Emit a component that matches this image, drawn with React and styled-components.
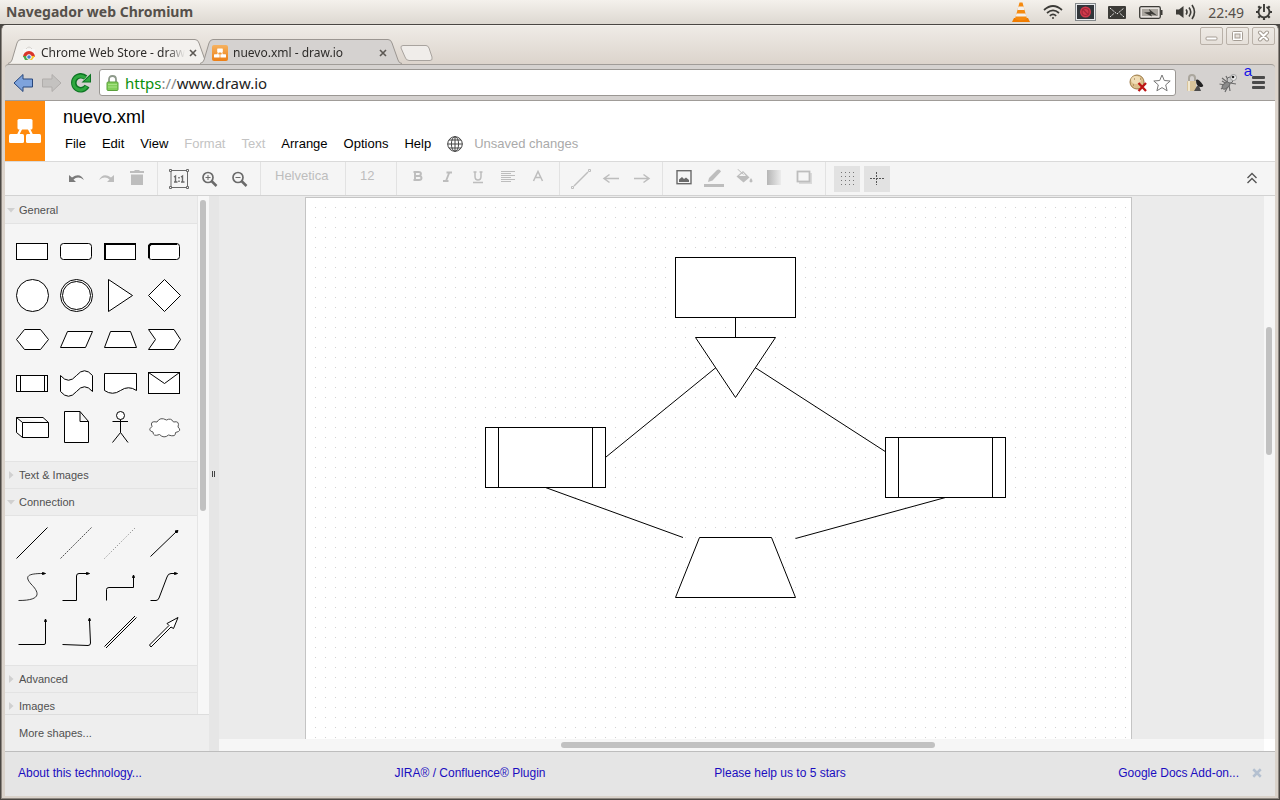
import React, { useState } from 'react';
import styled, { createGlobalStyle } from 'styled-components';

const GlobalStyle = createGlobalStyle`
    * {
        box-sizing: border-box;
    }
    body {
        margin: 0;
        background-color: #4a4743;
        font-family: "Liberation Sans", Arial, sans-serif;
    }
    button {
        padding: 0;
        border: none;
        background: none;
        font: inherit;
        color: inherit;
    }
    svg {
        display: block;
        flex: none;
    }
`;

const Desktop = styled.div`
    display: flex;
    flex-direction: column;
    height: 100vh;
    min-height: 600px;
`;

/* ---------- system panel ---------- */

const Panel = styled.header`
    display: flex;
    align-items: center;
    justify-content: space-between;
    height: 24px;
    flex: none;
    padding: 0 8px 0 6px;
    background: linear-gradient(#f4f1ec, #ddd8d1);
    color: #55504a;
    font-family: "Noto Sans", "Open Sans", sans-serif;
    font-size: 14px;
`;

const PanelTitle = styled.h1`
    margin: 0;
    font-size: 14px;
    line-height: 20px;
    font-weight: bold;
`;

const Tray = styled.div`
    display: flex;
    align-items: center;
    gap: 12px;
`;

/* ---------- browser window ---------- */

const Window = styled.div`
    display: flex;
    flex-direction: column;
    flex: 1;
    min-height: 0;
    margin: 1px 1px 1px 1px;
    padding: 0 3px 2px 3px;
    border: 1px solid #8d8781;
    border-top-color: #f5f2ee;
    border-radius: 5px 5px 0 0;
    background: linear-gradient(#efebe6, #dcd4cc 38px, #d9d2ca);
`;

const TabStrip = styled.div`
    display: flex;
    align-items: flex-end;
    height: 38px;
    flex: none;
    padding-left: 3px;
    position: relative;
`;

const TabBox = styled.div`
    position: relative;
    display: flex;
    align-items: center;
    width: ${props => props.$width}px;
    height: 25px;
    margin-right: -9px;
    padding: 2px 13px 0 ${props => props.$pad}px;
    z-index: ${props => (props.$active ? 2 : 1)};
    color: #2e2c2a;
    font-family: "Noto Sans", "Open Sans", sans-serif;
    font-size: 12px;

    > svg:first-child {
        position: absolute;
        left: 0;
        top: 0;
    }
    > svg + svg {
        position: relative;
    }
`;

const TabLabel = styled.span`
    position: relative;
    flex: 1;
    margin-left: 5px;
    white-space: nowrap;
    mask-image: linear-gradient(to right, #000 calc(100% - 18px), transparent);
`;

const TabClose = styled.button`
    position: relative;
    display: grid;
    place-items: center;
    width: 12px;
    height: 16px;
    margin-left: 4px;
    color: #5c5854;
`;

const NewTab = styled.button`
    width: 34px;
    height: 18px;
    margin: 0 0 2px 7px;
`;

const WindowButtons = styled.div`
    display: flex;
    gap: 3px;
    position: absolute;
    top: 1px;
    right: 0;
`;

const WindowButton = styled.button`
    display: grid;
    place-items: center;
    width: 23px;
    height: 18px;
    border: 1px solid #b9b1a8;
    border-radius: 2px;
`;

const AddressBar = styled.div`
    position: relative;
    display: flex;
    align-items: center;
    height: 37px;
    flex: none;
    padding: 0 10px 0 7px;
    border: 1px solid #a09c98;
    border-width: 1px 0;
    border-radius: 4px 4px 0 0;
    background-color: #d5d2d0;
`;

const NavButton = styled.button`
    width: 22px;
    height: 22px;
    margin-right: 7px;
`;

const UrlField = styled.label`
    display: flex;
    align-items: center;
    flex: 1;
    height: 27px;
    padding: 0 4px 0 6px;
    border: 1px solid #9a9793;
    border-radius: 3px;
    background-color: #fff;
    gap: 6px;
`;

const UrlLayers = styled.span`
    position: relative;
    flex: 1;
    height: 24px;
    font-family: "Noto Sans", "Open Sans", sans-serif;
    font-size: 15px;
    line-height: 24px;
    color: #222;
`;

const UrlInput = styled.input`
    position: absolute;
    inset: 0;
    width: 100%;
    padding: 0;
    border: none;
    outline: none;
    background: transparent;
    font: inherit;
    color: transparent;
    caret-color: #222;
`;

const Scheme = styled.span`
    color: #0a8f0a;
`;

const Slashes = styled.span`
    color: #8a8a8a;
`;

const Extensions = styled.div`
    display: flex;
    align-items: center;
    gap: 14px;
    margin-left: 8px;
`;

const StrayLetter = styled.span`
    position: absolute;
    top: -2px;
    right: 23px;
    color: #1414e6;
    font-size: 15px;
    line-height: 16px;
`;

/* ---------- editor ---------- */

const Editor = styled.main`
    display: flex;
    flex-direction: column;
    flex: 1;
    min-height: 0;
    background-color: #ebebeb;
`;

const EditorHeader = styled.div`
    display: flex;
    height: 60px;
    flex: none;
    background-color: #fff;
`;

const Logo = styled.a`
    display: grid;
    place-items: center;
    width: 40px;
    background-color: #ff8a0d;
`;

const HeaderText = styled.div`
    padding: 4px 0 0 10px;
`;

const FileName = styled.h2`
    margin: 0;
    padding-left: 8px;
    font-size: 18px;
    line-height: 24px;
    font-weight: normal;
    color: #000;
`;

const MenuBar = styled.nav`
    display: flex;
    align-items: center;
    padding: 4px 2px;
    font-size: 13px;
    line-height: 22px;
`;

const MenuItem = styled.button`
    padding: 0 8px;
    color: #000;
    &:disabled {
        color: #c3c3c3;
    }
`;

const Status = styled.span`
    padding-left: 3px;
    color: #aaa;
`;

const Toolbar = styled.div`
    display: flex;
    height: 35px;
    flex: none;
    border-top: 1px solid #dadada;
    border-bottom: 1px solid #d2d2d2;
    background-color: #f5f5f5;
`;

const ToolGroup = styled.div`
    display: flex;
    align-items: center;
    padding: 0 6px;
    border-left: 1px solid #e2e2e2;
    &:first-child {
        padding: 0 5px 0 57px;
        border-left: none;
    }
`;

const ToolButton = styled.button`
    display: grid;
    place-items: center;
    width: 26px;
    height: 26px;
    margin: 0 2px;
    background-color: ${props => (props.$on ? '#e2e2e2' : 'transparent')};
    color: ${props => (props.$faint ? '#bdbdbd' : '#6a6a6a')};
`;

const FontPicker = styled.button`
    width: ${props => props.$width}px;
    height: 26px;
    padding: 0 0 6px 8px;
    font-size: 13px;
    line-height: 20px;
    text-align: left;
    color: #bdbdbd;
`;

const CollapseButton = styled(ToolButton)`
    margin: 3px 10px 0 auto;
`;

const Workspace = styled.div`
    display: flex;
    flex: 1;
    min-height: 0;
`;

const Sidebar = styled.aside`
    display: flex;
    flex-direction: column;
    width: 204px;
    flex: none;
    color: #505050;
    font-size: 11px;
`;

const SidebarScroll = styled.div`
    display: flex;
    flex: 1;
    min-height: 0;
    overflow: hidden;
    background-color: #f7f7f7;
`;

const Palettes = styled.div`
    width: 193px;
    padding-top: 1px;
    border-right: 1px solid #e5e5e5;
    background-color: #eee;
`;

const SidebarTrack = styled.div`
    flex: 1;
    padding: 4px 2px;
`;

const Thumb = styled.div`
    border-radius: 3px;
    background-color: #c1c1c1;
`;

const SidebarThumb = styled(Thumb)`
    width: 6px;
    height: 61%;
`;

const PaletteTitle = styled.button`
    display: flex;
    align-items: center;
    width: 100%;
    height: 27px;
    gap: 4px;
    padding-left: 2px;
    border-bottom: 1px solid #e3e3e3;
    background-color: #eee;
`;

const PaletteBody = styled.div`
    display: grid;
    grid-template-columns: repeat(4, 44px);
    grid-auto-rows: 44px;
    padding: 5px 0 12px 5px;
    border-bottom: 1px solid #e3e3e3;
    background-color: #f5f5f5;
`;

const ShapeButton = styled.button`
    display: grid;
    place-items: center;
`;

const MoreShapes = styled.button`
    height: 37px;
    flex: none;
    padding-left: 14px;
    border-top: 1px solid #ddd;
    background-color: #eee;
    text-align: left;
`;

const Splitter = styled.div`
    display: grid;
    place-items: center;
    width: 10px;
    flex: none;
    background-color: #e6e6e6;
`;

const CanvasArea = styled.div`
    display: grid;
    grid-template-columns: 1fr 11px;
    grid-template-rows: 1fr 12px;
    flex: 1;
    min-width: 0;
`;

const Canvas = styled.div`
    display: flex;
    min-height: 0;
    overflow: hidden;
    padding: 1px 0 0 86px;
`;

const Sheet = styled.div`
    width: 827px;
    flex: none;
    border: 1px solid #c4c4c4;
    border-bottom: none;
    background-color: #fff;
`;

const TrackY = styled.div`
    padding: 131px 2px 0 2px;
    background-color: #f6f6f6;
`;

const TrackX = styled.div`
    padding: 3px 0 0 calc(33% - 3px);
    background-color: #f6f6f6;
`;

const ThumbY = styled(Thumb)`
    width: 6px;
    height: 128px;
`;

const ThumbX = styled(Thumb)`
    width: 374px;
    height: 6px;
`;

const Corner = styled.div`
    background-color: #fff;
`;

const Footer = styled.footer`
    display: grid;
    grid-template-columns: repeat(4, 1fr) 30px;
    align-items: center;
    height: 45px;
    flex: none;
    padding-bottom: 2px;
    border-top: 1px solid #bdbdbd;
    background-color: #e5e5e5;
    font-size: 12px;
    text-align: center;

    a {
        color: #1a0dc0;
        text-decoration: none;
    }
    a:first-child {
        padding-left: 13px;
        text-align: left;
    }
    a:nth-child(4) {
        padding-right: 6px;
        text-align: right;
    }
`;

const FooterClose = styled.button`
    display: grid;
    place-items: center;
    width: 24px;
    height: 20px;
    color: #b4c0d0;
`;

/* ---------- drawings ---------- */

const TrayIcons = () => (
    <>
        <svg width="20" height="22" viewBox="0 0 20 22">
            <path d="M3 17 h14 l2 4 h-18z" fill="#f07c00" />
            <path d="M8.5 1.500 h3 L16 18 q-6 2.500 -12 0z" fill="#f58a10" />
            <path d="M7.400 5.500 h5.200 l1 3.500 h-7.200z M5.500 12.500 h9 l.9 3 h-10.800z" fill="#f4f1ee" />
        </svg>
        <svg width="20" height="16" viewBox="0 0 20 16" fill="none" stroke="#3c3b37" strokeWidth="1.700">
            <path d="M1 6 Q10 -2 19 6 M4 9 Q10 3.600 16 9 M6.800 11.800 Q10 9 13.200 11.800" />
            <circle cx="10" cy="14" r="1" fill="#3c3b37" stroke="none" />
        </svg>
        <svg width="21" height="18" viewBox="0 0 21 18">
            <rect x=".5" y=".5" width="20" height="17" fill="#e7eaed" stroke="#85898b" />
            <rect x="2" y="2" width="17" height="14" fill="#32363a" />
            <circle cx="10.500" cy="9" r="5.500" fill="#d23b4c" />
            <circle cx="10.500" cy="9" r="3.500" fill="none" stroke="#a3273a" strokeWidth="1.200" />
            <path d="M8 6.500 l5 5" stroke="#a3273a" strokeWidth="1.200" />
        </svg>
        <svg width="18" height="13" viewBox="0 0 18 13">
            <rect width="18" height="13" rx="1" fill="#3c3b37" />
            <path d="M2 2 L9 8 L16 2 M2 11 L6.500 7 M16 11 L11.500 7" fill="none" stroke="#eee" strokeDasharray="2 1" />
        </svg>
        <svg width="26" height="13" viewBox="0 0 26 13">
            <rect x="1.700" y=".7" width="20.600" height="11.600" rx="1.500" fill="#e5e1dc" stroke="#3c3b37" strokeWidth="1.300" />
            <rect x="4" y="3" width="16" height="7" fill="#aaa69f" />
            <rect x="23" y="4" width="1.500" height="5" fill="#3c3b37" />
            <path d="M6 6.500 l6 -.5 l-1 -3 l8 6.500 l-6 -1.500 l1 2.500z" fill="#3c3b37" />
        </svg>
        <svg width="20" height="16" viewBox="0 0 20 16" fill="none" stroke="#3c3b37" strokeWidth="1.600">
            <path d="M0 5.500 h3 l4.500 -3.500 v12 l-4.500 -3.500 h-3z" fill="#3c3b37" stroke="none" />
            <path d="M10 5.500 q2 2.500 0 5 M13 3.500 q3.500 4.500 0 9 M16 1 q5 7 0 14" />
        </svg>
    </>
);

const PowerIcon = () => (
    <svg width="16" height="16" viewBox="0 0 16 16" fill="none" stroke="#3c3b37">
        <path d="M5.500 3 A5.500 5.500 0 1 0 10.500 3" strokeWidth="1.900" />
        <path d="M8 0 v8" strokeWidth="1.900" />
        <path d="M0 8 h3 M13 8 h3 M8 13 v3 M2.300 2.300 l2 2 M13.700 2.300 l-2 2 M2.300 13.700 l2 -2 M13.700 13.700 l-2 -2" strokeWidth="2.200" />
    </svg>
);

const TabShape = ({ width, active }) => (
    <svg width={width} height="25" fill={active ? '#d5d2d0' : '#f3f1ee'} stroke="#9b9691">
        <path d={`M0 24.500 Q3 24 4 21 L9 4 Q10 .5 13 .5 H${width - 14} Q${width - 11} .5 ${width - 10} 4 L${width - 4} 21 Q${width - 3} 24.500 ${width} 24.500`} />
        {active && <path d={`M2 24.500 H${width - 2}`} stroke="#d5d2d0" />}
    </svg>
);

const StoreIcon = () => (
    <svg width="14" height="16" viewBox="0 0 14 16">
        <path d="M4 4 Q7 0 10 4" fill="none" stroke="#d6d3d0" />
        <rect x="1" y="4" width="12" height="11" rx="1" fill="#f7f7f7" />
        <path d="M1 12 a6 6 0 0 1 12 0 l-6 0z" fill="#d9352b" />
        <path d="M1 11 l2 4 h4 l-2 -4z" fill="#4aa847" />
        <path d="M13 11 l-3 4 h-4 l3 -4z" fill="#f6c52b" />
        <circle cx="7" cy="12" r="2.300" fill="#4580cf" stroke="#fff" />
    </svg>
);

const DrawIoGlyph = ({ size }) => (
    <svg width={size} height={size} viewBox="0 0 32 32" fill="#fff">
        <path d="M13 12 L8.500 21 M19 12 L23.500 21" stroke="#fff" strokeWidth="2.200" />
        <rect x="8.500" y="4" width="15" height="10.500" rx="1.500" />
        <rect x="0" y="19" width="15" height="9" rx="1.500" />
        <rect x="17" y="19" width="15" height="9" rx="1.500" />
    </svg>
);

const FavIcon = styled.span`
    position: relative;
    display: grid;
    place-items: center;
    width: 16px;
    height: 16px;
    border-radius: 2px;
    background: linear-gradient(#f6b25f, #ec7f16);
`;

const CrossIcon = ({ size = 8, width = 2 }) => (
    <svg width={size} height={size} viewBox="0 0 8 8" stroke="currentColor" strokeWidth={width}>
        <path d="M1 1 L7 7 M7 1 L1 7" />
    </svg>
);

const NavArrow = ({ flip, fill, stroke }) => (
    <svg width="22" height="22" viewBox="0 0 22 22">
        <path
            d="M2 11 L11 2.500 V7 H20.500 V15 H11 V19.500 Z"
            transform={flip ? 'matrix(-1 0 0 1 22 0)' : undefined}
            fill={fill}
            stroke={stroke}
            strokeLinejoin="round"
        />
    </svg>
);

const ReloadIcon = () => (
    <svg width="22" height="22" viewBox="0 0 22 22">
        <path d="M17 14 A7 7 0 1 1 15.500 5.500" fill="none" stroke="#0d7423" strokeWidth="5.500" />
        <path d="M21 1.500 V10.500 H11.500 Z" fill="#0d7423" />
        <path d="M16.500 14.500 A7 7 0 1 1 15.500 6" fill="none" stroke="#2fa83f" strokeWidth="3" />
        <path d="M20 4 V9.500 H14 Z" fill="#2fa83f" />
    </svg>
);

const LockIcon = () => (
    <svg width="13" height="16" viewBox="0 0 13 16">
        <path d="M3 8 V4.500 Q3 1 6.500 1 Q10 1 10 4.500 V8" fill="none" stroke="#8e9a8b" strokeWidth="1.800" />
        <rect x="1" y="7" width="11" height="8.500" rx="1" fill="#82cf5a" stroke="#5aa03b" />
        <path d="M2 9.500 h9 M2 12 h9" stroke="#a8e285" />
    </svg>
);

const CookieIcon = () => (
    <svg width="18" height="18" viewBox="0 0 18 18">
        <circle cx="8" cy="8" r="7" fill="#dcbf8c" stroke="#9b7a47" />
        <ellipse cx="7" cy="6" rx="5" ry="4" fill="#efdcb5" />
        <path d="M4 11 h1 M11 5 h1 M5 5 h1" stroke="#8a673a" />
        <path d="M9.500 9 L17 17 M17 9 L9.500 17" stroke="#bd1414" strokeWidth="2.300" />
    </svg>
);

const StarIcon = () => (
    <svg width="18" height="18" viewBox="0 0 18 18">
        <path d="M9 1 L11.300 6.500 L17.200 7 L12.700 10.900 L14.100 16.800 L9 13.600 L3.900 16.800 L5.300 10.900 L.8 7 L6.700 6.500 Z" fill="#fff" stroke="#777" strokeLinejoin="round" />
    </svg>
);

const PadlockDishIcon = () => (
    <svg width="20" height="20" viewBox="0 0 20 20">
        <path d="M5 9 V5 Q5 2 8 2 Q11 2 11 5 V8" fill="none" stroke="#aaa69d" strokeWidth="2" />
        <rect x="3" y="8" width="9" height="10" rx="1" fill="#d8c49a" />
        <path d="M5 8 v10" stroke="#f2e8cf" strokeWidth="2" />
        <path d="M12 7 Q14 5 19 12 Q20 14 16 14 Q12 13 12 7z" fill="#232323" />
        <path d="M13 13 L10 18 h7 l-2 -5z" fill="#4b4b4b" />
    </svg>
);

const BugIcon = () => (
    <svg width="20" height="20" viewBox="0 0 20 20" stroke="#6b6b6b">
        <path d="M4 8 L9 11 M1.500 11 L7 12 M3 16 L8 13 M7 19 L10 13 M12 18 L11 12 M8 3 L11 9 M18 11 L12 10 M4 5 L9 9" strokeWidth="1.200" />
        <ellipse cx="8" cy="12.500" rx="4.500" ry="2.500" transform="rotate(-42 8 12.500)" fill="#8b8b8b" />
        <circle cx="12" cy="7" r="3" fill="#c9c9c9" />
        <circle cx="15.500" cy="4.500" r="3" fill="#eee" stroke="#999" />
        <circle cx="15" cy="4" r="1.300" fill="#222" stroke="none" />
    </svg>
);

const MenuIcon = () => (
    <svg width="13" height="13" viewBox="0 0 13 13" fill="#4a4a4a">
        <rect width="13" height="3" rx="1" />
        <rect y="5" width="13" height="3" rx="1" />
        <rect y="10" width="13" height="3" rx="1" />
    </svg>
);

const GlobeIcon = () => (
    <svg width="16" height="16" viewBox="0 0 16 16" fill="none" stroke="#444">
        <circle cx="8" cy="8" r="7.300" />
        <ellipse cx="8" cy="8" rx="3.600" ry="7.300" />
        <path d="M8 .5 V15.500 M.5 8 H15.500 M2 4 H14 M2 12 H14" />
    </svg>
);

const toolIcons = {
    undo: <path d="M2 6 V13 H9 L6.500 10.500 Q11 6.500 17 11 Q13 3 5 8.500 Z" fill="#7b7b7b" stroke="none" />,
    redo: <path d="M17 6 V13 H10 L12.500 10.500 Q8 6.500 2 11 Q6 3 14 8.500 Z" fill="currentColor" stroke="none" />,
    trash: <path d="M3 2 h4 l1 -1 h4 l1 1 h4 v2 H3z M4 5.500 H16 V16 H4z" fill="currentColor" stroke="none" />,
    actual: (
        <>
            <path d="M2 1.500 H18.500 V18.500 H2 Z" />
            <path d="M.5 .5 h2 v2 h-2z M17.500 .5 h2 v2 h-2z M.5 17.500 h2 v2 h-2z M17.500 17.500 h2 v2 h-2z" fill="#f5f5f5" />
            <path d="M5 8 l1.500 -1 v6 M5 13 h3.500 M12 8 l1.500 -1 v6 M12 13 h3.500" strokeWidth="1.400" />
            <path d="M10 8 v1.500 M10 11.500 v1.500" strokeWidth="1.500" />
        </>
    ),
    zoomIn: (
        <>
            <circle cx="9" cy="8.500" r="5" strokeWidth="1.700" />
            <path d="M12.500 12 L17.500 17" strokeWidth="2.500" />
            <path d="M6.500 8.500 h5 M9 6 v5" />
        </>
    ),
    zoomOut: (
        <>
            <circle cx="9" cy="8.500" r="5" strokeWidth="1.700" />
            <path d="M12.500 12 L17.500 17" strokeWidth="2.500" />
            <path d="M6.500 8.500 h5" />
        </>
    ),
    bold: <path d="M7 3 H10.500 Q13 3 13 5 Q13 6.500 11 6.800 Q13.500 7.200 13.500 9 Q13.500 11 11 11 H7 Z M5.500 3 H8 M5.500 11 H8 M7.500 7 H11" strokeWidth="1.900" />,
    italic: <path d="M8.500 3.500 H14 M5 12 H10.500 M11.500 3 L8 12" strokeWidth="1.900" />,
    underline: <path d="M7 3 V7.500 Q7 11 10 11 Q13 11 13 7.500 V3 M5.500 3 H8.500 M11.500 3 H14.500 M5 13.500 H15" strokeWidth="1.500" />,
    align: <path d="M3 2.500 H17 M3 4.500 H13 M3 6.500 H17 M3 8.500 H13 M3 10.500 H17 M3 12.500 H13" />,
    fontColor: <path d="M5.500 12 L10 2.500 L14.500 12 M7 8.500 H13" strokeWidth="1.500" />,
    line: (
        <>
            <path d="M3 17 L17 3" strokeWidth="1.400" />
            <path d="M.5 17.500 h2 v2 h-2z M17.500 .5 h2 v2 h-2z" fill="#f5f5f5" />
        </>
    ),
    arrowLeft: <path d="M3 9.500 H18 M8.500 5.500 L3 9.500 L8.500 13.500" strokeWidth="1.500" />,
    arrowRight: <path d="M3 9.500 H18 M12.500 5.500 L18 9.500 L12.500 13.500" strokeWidth="1.500" />,
    image: (
        <>
            <rect x="3" y="1.700" width="14" height="13" strokeWidth="1.400" />
            <path d="M5 13 V10.500 L8 8 L10 10 L12 8.500 L15 11 V13z" fill="currentColor" stroke="none" />
        </>
    ),
    pencil: (
        <>
            <path d="M4 13 L5 9 L13 1 Q15.500 -.5 17 2.500 L8.500 11.500 Z" fill="currentColor" stroke="none" />
            <path d="M0 16.500 H20" strokeWidth="3" />
        </>
    ),
    bucket: (
        <>
            <path d="M9 2 L15.500 8.500 L9.500 13.500 L2.500 7.500z" fill="currentColor" stroke="none" />
            <path d="M5 7 L9 3.500 L12 7z" fill="#f5f5f5" stroke="none" />
            <path d="M3.500 0 L9.500 5.500" />
            <path d="M17 9 q3 4 0 4.500 q-3 -.5 0 -4.500z" fill="currentColor" stroke="none" />
        </>
    ),
    gradient: (
        <>
            <defs>
                <linearGradient id="fade">
                    <stop offset="0" stopColor="#b5b5b5" />
                    <stop offset="1" stopColor="#ececec" />
                </linearGradient>
            </defs>
            <rect x="3" y="1" width="14" height="15" fill="url(#fade)" stroke="none" />
        </>
    ),
    shadow: (
        <>
            <rect x="5" y="4" width="13" height="11" fill="#dadada" stroke="none" />
            <rect x="3.500" y="2.500" width="12" height="10" fill="#f5f5f5" strokeWidth="1.800" />
        </>
    ),
    grid: <path d="M4 3.500 H17 M4 7.500 H17 M4 11.500 H17 M4 15.500 H17" stroke="#777" strokeDasharray="1 3" />,
    guides: <path d="M3 9.500 H17 M9.500 3 V16" stroke="#555" strokeDasharray="2 1" />,
    collapse: <path d="M5.500 10 L10 5.500 L14.500 10 M5.500 15 L10 10.500 L14.500 15" stroke="#555" strokeWidth="1.400" />,
};

const ToolIcon = ({ name }) => (
    <svg width="20" height="20" viewBox="0 0 20 20" fill="none" stroke="currentColor">
        {toolIcons[name]}
    </svg>
);

const Triangle = ({ open }) => (
    <svg width="8" height="8" viewBox="0 0 8 8" fill="#d0d0d0">
        <path d={open ? 'M0 2 H8 L4 6.500z' : 'M2 0 L6.500 4 L2 8z'} />
    </svg>
);

const white = '#fff';

const generalShapes = [
    ['Rectangle', <rect x="6.500" y="14.500" width="31" height="16" fill={white} />],
    ['Rounded rectangle', <rect x="6.500" y="14.500" width="31" height="16" rx="3" fill={white} />],
    ['Shaded rectangle', <><rect x="6.500" y="14.500" width="31" height="16" fill={white} /><path d="M7 30 V15 H37" strokeWidth="2" /></>],
    ['Shaded rounded rectangle', <><rect x="6.500" y="14.500" width="31" height="16" rx="3" fill={white} /><path d="M7 29 V17 L9 15 H35" strokeWidth="2" /></>],
    ['Ellipse', <circle cx="22.500" cy="22.500" r="16" fill={white} />],
    ['Double ellipse', <><circle cx="22.500" cy="22.500" r="16" fill={white} /><circle cx="22.500" cy="22.500" r="14" /></>],
    ['Triangle', <path d="M10.500 6.500 L34.500 22.500 L10.500 38.500z" fill={white} />],
    ['Diamond', <path d="M22.500 6.500 L38.500 22.500 L22.500 38.500 L6.500 22.500z" fill={white} />],
    ['Hexagon', <path d="M14.500 12.500 H30.500 L38.500 22.500 L30.500 32.500 H14.500 L6.500 22.500z" fill={white} />],
    ['Parallelogram', <path d="M13.500 14.500 H38.500 L31.500 30.500 H6.500z" fill={white} />],
    ['Trapezoid', <path d="M12.500 14.500 H32.500 L38.500 30.500 H6.500z" fill={white} />],
    ['Step', <path d="M6.500 12.500 H32 L38.500 22.500 L32 32.500 H6.500 L13.500 22.500z" fill={white} />],
    ['Process', <><rect x="6.500" y="14.500" width="31" height="16" fill={white} /><path d="M10.500 14.500 V30.500 M34.500 14.500 V30.500" /></>],
    ['Tape', <path d="M6.500 14.500 Q14.500 24 22.500 14.500 T38.500 14.500 V30.500 Q30.500 21 22.500 30.500 T6.500 30.500z" fill={white} />],
    ['Document', <path d="M6.500 12.500 H38.500 V29.500 Q30.500 24 22.500 29.500 T6.500 29.500z" fill={white} />],
    ['Message', <><rect x="6.500" y="11.500" width="31" height="21" fill={white} /><path d="M6.500 11.500 L22.500 22.500 L37.500 11.500" /></>],
    ['Cube', <path d="M6.500 12.500 H33 L38.500 17.500 V32.500 H12.500 L6.500 27.500z M6.500 12.500 L12.500 17.500 H38.500 M12.500 17.500 V32.500" fill={white} />],
    ['Note', <path d="M10.500 6.500 H26 L34.500 16.500 V37.500 H10.500z M26 6.500 V16.500 H34.500" fill={white} />],
    ['Actor', <><circle cx="22.500" cy="10.500" r="4" fill={white} /><path d="M22.500 14.500 V27.500 M14.500 16.500 H30 M22.500 27.500 L14.500 37.500 M22.500 27.500 L30 37.500" /></>],
    ['Cloud', <path d="M15 17 Q7.500 15.500 10 21.500 Q5 25.500 11 27 Q11 32 17.500 29.500 Q22 34 26.500 30 Q34 32.500 33.500 27.500 Q40.500 26 36 22 Q38 15.500 31.500 17 Q29 12.500 24.500 15 Q18 11.500 15 17z" fill={white} stroke="#555" />],
];

const connectionShapes = [
    ['Line', <path d="M6.500 37.500 L37.500 6.500" />],
    ['Dashed line', <path d="M6.500 37.500 L37.500 6.500" stroke="#555" strokeDasharray="2 1" />],
    ['Dotted line', <path d="M6.500 37.500 L37.500 6.500" stroke="#777" strokeDasharray="1 2" />],
    ['Connector', <><path d="M8.500 35.500 L35 10" /><path d="M36 9.500 l-1 2.500 l-2 -2z" fill="#000" /></>],
    ['Curve', <><path d="M8.500 35.500 C34 35.500 28 26 21 19 C14 11 18 8.500 33 8.500" stroke="#333" /><path d="M35.500 8.500 l-3 -1 v2z" fill="#000" /></>],
    ['Elbow', <><path d="M8.500 35.500 H22.500 V11 Q22.500 8.500 25 8.500 H33" /><path d="M35.500 8.500 l-3 -1 v2z" fill="#000" /></>],
    ['Vertical elbow', <><path d="M8.500 35.500 V24.500 Q8.500 22.500 11 22.500 H35.500 V12" /><path d="M35.500 10 l-1 2.500 h2z" fill="#000" /></>],
    ['Isometric', <><path d="M8.500 35.500 H14 Q16 35.500 17 33 L25 12 Q26 8.500 29 8.500 H33" /><path d="M35.500 8.500 l-3 -1 v2z" fill="#000" /></>],
    ['Right angle', <><path d="M8.500 35.500 H34 Q35.500 35.500 35.500 34 V12" /><path d="M35.500 10 l-1 2.500 h2z" fill="#000" /></>],
    ['Arc', <><path d="M8.500 35.500 L34 36.500 Q36.500 36.500 36.500 34 L35.500 12" /><path d="M35.500 9 l-1 2.500 h2z" fill="#000" /></>],
    ['Link', <path d="M6.500 37.500 L37 7 M8 39 L38.500 8.500" />],
    ['Arrow', <path d="M7.500 36 L27 16.500 L25 14.500 L36 8.500 L31.500 19.500 L29 18 L9 38z" fill={white} />],
];

const Palette = ({ shapes }) => (
    <PaletteBody>
        {shapes.map(([name, drawing]) => (
            <ShapeButton key={name} aria-label={name}>
                <svg width="44" height="44" fill="none" stroke="#000">{drawing}</svg>
            </ShapeButton>
        ))}
    </PaletteBody>
);

const Diagram = () => (
    <svg width="100%" height="100%" fill="#fff" stroke="#000">
        <defs>
            <pattern id="dots" x="9" y="9" width="10" height="10" patternUnits="userSpaceOnUse">
                <rect width="1" height="1" fill="#d2d2d2" stroke="none" />
            </pattern>
        </defs>
        <rect width="100%" height="100%" fill="url(#dots)" stroke="none" />
        <path d="M429.500 119 V139 M410 169.500 L300 259 M449 169.500 L580 254 M239.500 289.500 L377 339.500 M639.500 299.500 L489.500 340.500" fill="none" />
        <rect x="369.500" y="59.500" width="120" height="60" />
        <path d="M389.500 139.500 H469.500 L429.500 199.500z" />
        <rect x="179.500" y="229.500" width="120" height="60" />
        <path d="M192.500 229.500 V289.500 M286.500 229.500 V289.500" />
        <rect x="579.500" y="239.500" width="120" height="60" />
        <path d="M592.500 239.500 V299.500 M686.500 239.500 V299.500" />
        <path d="M393.500 339.500 H465.500 L489.500 399.500 H369.500z" />
    </svg>
);

const toolGroups = [
    ['undo', 'redo', 'trash'],
    ['actual', 'zoomIn', 'zoomOut'],
    'fonts',
    ['bold', 'italic', 'underline', 'align', 'fontColor'],
    ['line', 'arrowLeft', 'arrowRight'],
    ['image', 'pencil', 'bucket', 'gradient', 'shadow'],
    ['grid', 'guides'],
];

const dark = ['undo', 'actual', 'zoomIn', 'zoomOut', 'image', 'grid', 'guides'];

const menus = ['File', 'Edit', 'View', 'Format', 'Text', 'Arrange', 'Options', 'Help'];

const App = () => {
    const [url, setUrl] = useState('https://www.draw.io');
    const [scheme, rest] = url.includes('://') ? url.split('://') : ['', url];

    return (
        <Desktop>
            <GlobalStyle />
            <Panel>
                <PanelTitle>Navegador web Chromium</PanelTitle>
                <Tray>
                    <TrayIcons />
                    <time>22:49</time>
                    <PowerIcon />
                </Tray>
            </Panel>
            <Window>
                <TabStrip>
                    <TabBox $width={201} $pad={14}>
                        <TabShape width={201} />
                        <StoreIcon />
                        <TabLabel>Chrome Web Store - draw</TabLabel>
                        <TabClose aria-label="Close tab"><CrossIcon width={1.6} /></TabClose>
                    </TabBox>
                    <TabBox $width={202} $pad={12} $active>
                        <TabShape width={202} active />
                        <FavIcon><DrawIoGlyph size={12} /></FavIcon>
                        <TabLabel>nuevo.xml - draw.io</TabLabel>
                        <TabClose aria-label="Close tab"><CrossIcon width={1.6} /></TabClose>
                    </TabBox>
                    <NewTab aria-label="New tab">
                        <svg width="34" height="18" fill="#f0edea" stroke="#a8a39e">
                            <path d="M3 1.500 H26 Q28 1.500 29 4 L32 13 Q33 16.500 30 16.500 H9 Q6 16.500 5 13 L1 4 Q.5 1.500 3 1.500z" />
                        </svg>
                    </NewTab>
                    <WindowButtons>
                        <WindowButton aria-label="Minimize">
                            <svg width="13" height="12" fill="#fff" stroke="#a59d94"><rect x="1" y="7" width="11" height="3" rx="1" /></svg>
                        </WindowButton>
                        <WindowButton aria-label="Maximize">
                            <svg width="13" height="12" fill="#fff" stroke="#a59d94"><rect x="1.500" y="1.500" width="10" height="9" rx="1" /><rect x="4" y="4" width="5" height="4" fill="#e5dfd9" /></svg>
                        </WindowButton>
                        <WindowButton aria-label="Close">
                            <svg width="13" height="12" strokeLinecap="round"><path d="M3 2.500 L10 9.500 M10 2.500 L3 9.500" stroke="#a59d94" strokeWidth="4" /><path d="M3 2.500 L10 9.500 M10 2.500 L3 9.500" stroke="#fff" strokeWidth="2" /></svg>
                        </WindowButton>
                    </WindowButtons>
                </TabStrip>
                <AddressBar>
                    <NavButton aria-label="Back"><NavArrow fill="#7ea3dc" stroke="#27467c" /></NavButton>
                    <NavButton aria-label="Forward"><NavArrow flip fill="#c4c2c0" stroke="#b0adab" /></NavButton>
                    <NavButton aria-label="Reload"><ReloadIcon /></NavButton>
                    <UrlField>
                        <LockIcon />
                        <UrlLayers>
                            <Scheme>{scheme}</Scheme>
                            {scheme && <Slashes>://</Slashes>}
                            {rest}
                            <UrlInput aria-label="Address" value={url} onChange={(e) => setUrl(e.target.value)} />
                        </UrlLayers>
                        <CookieIcon />
                        <StarIcon />
                    </UrlField>
                    <Extensions>
                        <PadlockDishIcon />
                        <BugIcon />
                        <MenuIcon />
                    </Extensions>
                    <StrayLetter>a</StrayLetter>
                </AddressBar>
                <Editor>
                    <EditorHeader>
                        <Logo href="#" aria-label="draw.io"><DrawIoGlyph size={32} /></Logo>
                        <HeaderText>
                            <FileName>nuevo.xml</FileName>
                            <MenuBar>
                                {menus.map((menu) => (
                                    <MenuItem key={menu} disabled={menu === 'Format' || menu === 'Text'}>{menu}</MenuItem>
                                ))}
                                <MenuItem aria-label="Language"><GlobeIcon /></MenuItem>
                                <Status>Unsaved changes</Status>
                            </MenuBar>
                        </HeaderText>
                    </EditorHeader>
                    <Toolbar>
                        {toolGroups.map((group) => group === 'fonts' ? (
                            <React.Fragment key="fonts">
                                <ToolGroup><FontPicker $width={72}>Helvetica</FontPicker></ToolGroup>
                                <ToolGroup><FontPicker $width={38}>12</FontPicker></ToolGroup>
                            </React.Fragment>
                        ) : (
                            <ToolGroup key={group[0]}>
                                {group.map((name) => (
                                    <ToolButton
                                        key={name}
                                        aria-label={name}
                                        $faint={!dark.includes(name)}
                                        $on={name === 'grid' || name === 'guides'}
                                    >
                                        <ToolIcon name={name} />
                                    </ToolButton>
                                ))}
                            </ToolGroup>
                        ))}
                        <CollapseButton aria-label="Collapse"><ToolIcon name="collapse" /></CollapseButton>
                    </Toolbar>
                    <Workspace>
                        <Sidebar>
                            <SidebarScroll>
                                <Palettes>
                                    <PaletteTitle><Triangle open />General</PaletteTitle>
                                    <Palette shapes={generalShapes} />
                                    <PaletteTitle><Triangle />Text &amp; Images</PaletteTitle>
                                    <PaletteTitle><Triangle open />Connection</PaletteTitle>
                                    <Palette shapes={connectionShapes} />
                                    <PaletteTitle><Triangle />Advanced</PaletteTitle>
                                    <PaletteTitle><Triangle />Images</PaletteTitle>
                                </Palettes>
                                <SidebarTrack><SidebarThumb /></SidebarTrack>
                            </SidebarScroll>
                            <MoreShapes>More shapes...</MoreShapes>
                        </Sidebar>
                        <Splitter>
                            <svg width="4" height="6" stroke="#444"><path d="M.5 0 V6 M2.500 0 V6" /></svg>
                        </Splitter>
                        <CanvasArea>
                            <Canvas>
                                <Sheet><Diagram /></Sheet>
                            </Canvas>
                            <TrackY><ThumbY /></TrackY>
                            <TrackX><ThumbX /></TrackX>
                            <Corner />
                        </CanvasArea>
                    </Workspace>
                    <Footer>
                        <a href="#about">About this technology...</a>
                        <a href="#plugin">JIRA® / Confluence® Plugin</a>
                        <a href="#stars">Please help us to 5 stars</a>
                        <a href="#addon">Google Docs Add-on...</a>
                        <FooterClose aria-label="Close"><CrossIcon size={10} /></FooterClose>
                    </Footer>
                </Editor>
            </Window>
        </Desktop>
    );
}

export default App
